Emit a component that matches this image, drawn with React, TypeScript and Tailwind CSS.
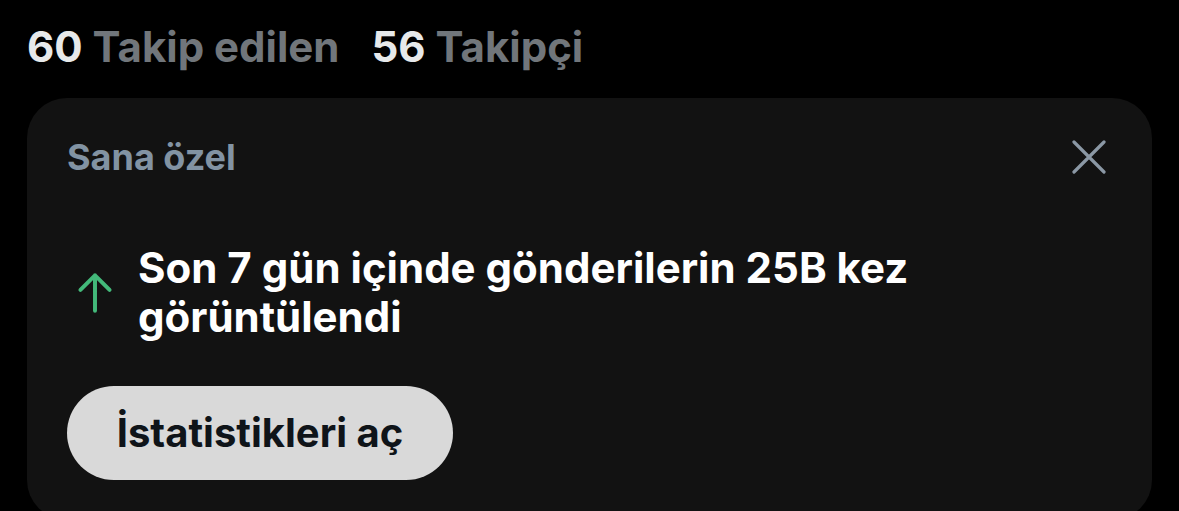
export default function App() {
  return (
    <div className="min-h-screen w-full overflow-hidden bg-black font-['Inter','Noto_Sans',sans-serif]">
      <div className="flex items-baseline gap-[32px] pl-[27px] pt-[21px] text-[42px] font-bold leading-[52px]">
        <span>
          <span className="text-[#e7e9ea]">60</span>{" "}
          <span className="text-[#71767b]">Takip edilen</span>
        </span>
        <span>
          <span className="text-[#e7e9ea]">56</span>{" "}
          <span className="text-[#71767b]">Takipçi</span>
        </span>
      </div>

      <div className="ml-[27px] mt-[25px] w-[1125px] rounded-[40px] bg-[#121212] pb-[40px] pl-[40px] pr-[46px] pt-[36px]">
        <div className="flex items-center justify-between">
          <span className="text-[36px] font-bold leading-[46px] text-[#8293a3]">Sana özel</span>
          <button type="button" className="flex h-[34px] w-[34px] items-center justify-center text-[#8b98a5]">
            <svg viewBox="0 0 34 34" className="h-[34px] w-[34px]" fill="none" stroke="currentColor" strokeWidth="3.2" strokeLinecap="round">
              <path d="M2 2l30 30M32 2L2 32" />
            </svg>
          </button>
        </div>

        <div className="mt-[63px] flex items-center gap-[18px]">
          <svg viewBox="0 0 24 24" className="ml-[3px] h-[50px] w-[50px] shrink-0 text-[#43b97a]" fill="none" stroke="currentColor" strokeWidth="1.9" strokeLinecap="round" strokeLinejoin="round">
            <path d="M12 21V4M5 11l7-7 7 7" />
          </svg>
          <p className="text-[42px] font-bold leading-[49px] text-white">
            Son 7 gün içinde gönderilerin 25B kez
            <br />
            görüntülendi
          </p>
        </div>

        <button
          type="button"
          className="mt-[45px] flex h-[94px] w-[386px] items-center justify-center rounded-full bg-[#d9d9d9] text-[40px] font-bold text-[#0f1419]"
        >
          İstatistikleri aç
        </button>
      </div>
    </div>
  );
}
